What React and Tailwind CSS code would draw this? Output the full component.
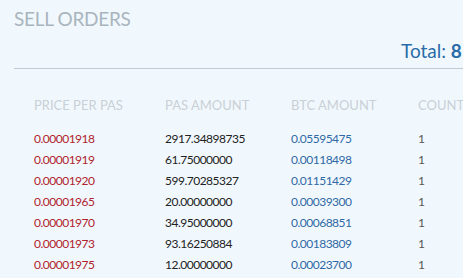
import React from "react";

const rows = [
  ["0.00001918", "2917.34898735", "0.05595475", "1"],
  ["0.00001919", "61.75000000", "0.00118498", "1"],
  ["0.00001920", "599.70285327", "0.01151429", "1"],
  ["0.00001965", "20.00000000", "0.00039300", "1"],
  ["0.00001970", "34.95000000", "0.00068851", "1"],
  ["0.00001973", "93.16250884", "0.00183809", "1"],
  ["0.00001975", "12.00000000", "0.00023700", "1"],
];

export default function App() {
  return (
    <div
      className="w-[463px] h-[278px] overflow-hidden bg-[#f1f8fd] pl-[14px]"
      style={{ fontFamily: "Lato, 'Noto Sans', sans-serif" }}
    >
      <div className="pt-[6px] text-[19px] leading-[26px] text-[#a9b5be] tracking-[-0.3px]">SELL ORDERS</div>
      <div className="flex pl-[387px] pt-[8px] h-[30px] whitespace-nowrap">
        <div className="shrink-0 text-[19px] leading-[22px] text-[#2a6ca8]">
          Total: <span className="font-bold">8</span>
        </div>
      </div>
      <div className="h-px bg-[#c3cbd2] mt-[6px]" />
      <div className="pl-[20px] pt-[27px] whitespace-nowrap">
        <div className="flex text-[13px] leading-[18px] text-[#c9d0d6] mb-[14px]">
          <div className="w-[131px] shrink-0">PRICE PER PAS</div>
          <div className="w-[126px] shrink-0">PAS AMOUNT</div>
          <div className="w-[127px] shrink-0">BTC AMOUNT</div>
          <div className="shrink-0">COUNT</div>
        </div>
        {rows.map((r, i) => (
          <div key={i} className="flex text-[12px] h-[21px] leading-[21px] tracking-[-0.5px]">
            <div className="w-[131px] shrink-0 text-[#b0232d]">{r[0]}</div>
            <div className="w-[126px] shrink-0 text-[#222]">{r[1]}</div>
            <div className="w-[127px] shrink-0 text-[#3069a6]">{r[2]}</div>
            <div className="shrink-0 text-[#555]">{r[3]}</div>
          </div>
        ))}
      </div>
    </div>
  );
}
